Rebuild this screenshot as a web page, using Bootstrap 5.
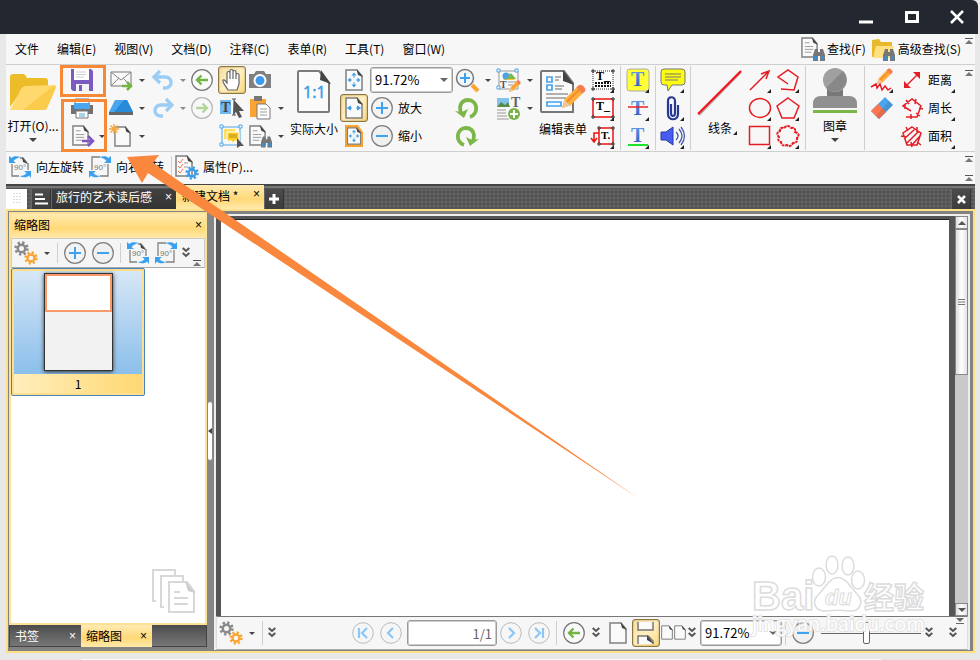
<!DOCTYPE html>
<html lang="zh-CN">
<head>
<meta charset="utf-8">
<meta name="viewport" content="width=device-width, initial-scale=1">
<title>新建文档 *</title>
<link href="https://cdn.jsdelivr.net/npm/bootstrap@5.3.0/dist/css/bootstrap.min.css" rel="stylesheet">
<style>
body{font-family:"Noto Sans CJK SC","Noto Sans",sans-serif;font-size:12px;line-height:16px;color:#000;background:#e8e8e8;min-height:100vh}
svg{display:block;flex:none;overflow:visible}
button{font:inherit;color:inherit;background:none;border:0;padding:0;white-space:nowrap}
.i24{width:24px;height:24px}
.titlebar{background:#23272f;height:34px;border-top-right-radius:6px;margin-right:2px;padding-right:15px;gap:32px;color:#fff}
.frame{margin:0 5px 0 6px;background:#f7f7f7}
.menubar{height:31px;border-bottom:1px solid #cfcfcf}
.menubar a{color:#000;text-decoration:none;padding:0 9px}
.ribbon{border-bottom:1px solid #cfcfcf;padding:1px 0;min-height:87px}
.rightcap{width:14px;flex:none}
.stack{width:28px;display:flex;flex-direction:column;flex:none}
.tool{width:28px;height:28px;display:flex;align-items:center;justify-content:center;position:relative;flex:none}
.drop{width:14px;height:28px;display:flex;align-items:center;justify-content:center;flex:none}
.drop::after,.tri{content:"";border:3px solid transparent;border-top-color:#444;border-bottom:0;width:0;height:0}
.wide14{width:14px}
.narrow{width:11px}
.narrow .drop{width:11px}
.tri.wide{border-width:4px 4px 0}
.dim{opacity:.6}
.more::after{content:"";position:absolute;right:3px;bottom:1px;border:2px solid;border-color:transparent #222 #222 transparent}
.picked{border:1px solid #8c7540;border-radius:3px;background:linear-gradient(135deg,#f6dfa2,#fff0c2 50%,#fbd880);box-shadow:inset 0 0 2px #a98d4c}
.gap2{margin-left:2px}
.big{display:flex;flex-direction:column;align-items:center;flex:none;position:relative;width:52px}
.big.wider{width:54px}
.big span{line-height:16px}
.zoomcol{width:83px}
.zoomcol > *{height:28px}
.measure{width:62px}
.rule{width:1px;background:#cfcfcf;margin:0 3px;flex:none;align-self:stretch}
.box{border:1px solid #9a9a9a;box-shadow:inset 0 0 0 1px #ccc;border-radius:3px;background-color:#fff;font-size:13px;line-height:24px;height:26px;padding:0 4px;color:#000}
.box.form-select{background-image:url("data:image/svg+xml,%3Csvg xmlns='http://www.w3.org/2000/svg' viewBox='0 0 8 4'%3E%3Cpath d='M0 0h8L4 4z' fill='%23666'/%3E%3C/svg%3E");background-size:8px 4px;background-position:right 4px center}
.props{height:32px;padding:0 2px 2px}
.weave{background-color:#5a5a5a;background-image:radial-gradient(#515151 1px,transparent 1px),radial-gradient(#636363 1px,transparent 1px);background-size:4px 4px;background-position:0 0,2px 2px}
.tabs{height:25px;border-top:2px solid #444;box-shadow:inset 0 2px #777}
.tabs button{height:20px}
.tabgrip{width:21px;height:20px}
.blk{background:linear-gradient(#4b4b4b,#3c3c3c);border-right:1px solid #333;border-left:1px solid #666;width:20px;display:flex;align-items:center;justify-content:center}
.doctab{background:linear-gradient(#414141,#333);color:#fff;width:125px;border-left:1px solid #666;padding-bottom:4px}
.gold{background:linear-gradient(#ffeab0,#ffd978 60%,#ffe9ab)}
.goldline{height:2px;background:#fde08a}
.tabs .nowtab{width:88px;height:24px;padding:0 4px 2px 6px}
.x{font-family:"Liberation Sans",sans-serif;font-size:12px;line-height:12px}
.work{border:2px solid #fddf88;border-top:0;background-color:#828282;flex:1;padding:1px 3px 1px 0}
.side{width:199px;padding-left:1px}
.sidebox{border:2px solid #fbe29a;flex:1;background:#fff}
.sidehead{height:24px;padding:0 3px 2px}
.sidebar{height:30px;background:#f5f5f5;border:1px solid #ccc;border-bottom-color:#aaa;position:relative}
.thumb{width:134px;border:1px solid #4784bd;border-radius:2px;padding:2px;background:#ffdf8b}
.sky{background:linear-gradient(#d7e7f6,#8bbfeb);height:103px;padding-top:2px}
.sheet{width:69px;height:98px;border:1px solid #333;background:#f2f2f2;box-shadow:0 1px 4px #333}
.view{height:38px;border:2px solid #fa9a68;background:#fff}
.num{height:19px;background:linear-gradient(90deg,#ffeebd,#ffd873);line-height:19px}
.foottabs{height:22px;margin-bottom:3px;border:1px solid #444;border-top:0;background:linear-gradient(#4c4c4c,#777)}
.foottabs button{color:#fff;height:22px;padding:0 5px;width:71px}
.split{width:7px;background:#868686}
.grip{width:6px;height:60px;border:1px solid #888;border-radius:3px;background:#fff;margin-top:-1px}
.doc{border:2px solid #eee;border-bottom:0;margin-top:2px;background:#555}
.canvas{background:#fff;border-top:1px solid #222;margin:3px 6px 0 5px}
.scroll{width:13px;background:#c9c9c9}
.scroll button{height:13px;display:flex;align-items:center;justify-content:center;background:linear-gradient(90deg,#ddd,#fff,#e3e3e3);border:1px solid #888}
.scroll .bar{height:146px}
.status{height:34px;background:#f6f6f6;border:1px solid #888;border-color:#777 #ddd #aaa;position:relative;padding-right:2px}
.pageno{width:90px;text-align:right;color:#666}
.pct{width:82px}
.zoomer{appearance:none;width:100px;height:24px;background:linear-gradient(#666,#666) center/100% 1px no-repeat}
.zoomer::-webkit-slider-thumb{appearance:none;width:7px;height:22px;border:1px solid #666;border-radius:2px;background:#fff}
.corner{position:absolute;right:3px}
.overlay{position:absolute;left:0;top:0;pointer-events:none}
.watermark{position:absolute;right:48px;bottom:22px;width:180px;height:84px;pointer-events:none}
.watermark text{font-family:"Noto Sans CJK SC",sans-serif}
.watermark .latin{font-family:"Liberation Sans",sans-serif}
.under{height:7px;padding:6px 99px 0 81px}
.under div{height:1px;background:#fff}
</style>
<script src="https://cdn.jsdelivr.net/npm/bootstrap@5.3.0/dist/js/bootstrap.bundle.min.js"></script>
</head>
<body class="d-flex flex-column position-relative">
<svg width="0" height="0" class="position-absolute" aria-hidden="true">
<defs>
<linearGradient id="gb" x1="0" y1="0" x2="0" y2="1"><stop offset="0" stop-color="#6ba0f0"/><stop offset="1" stop-color="#2257c0"/></linearGradient>
<symbol id="plus" viewBox="0 0 24 24"><circle cx="12" cy="12" r="10.3" fill="#f3f3f3" stroke="#808080" stroke-width="1.3"/><path d="M12 6v12M6 12h12" stroke="#3fa2ee" stroke-width="2"/></symbol>
<symbol id="minus" viewBox="0 0 24 24"><circle cx="12" cy="12" r="10.3" fill="#f0f0f0" stroke="#808080" stroke-width="1.3"/><path d="M6 12h12" stroke="#3fa2ee" stroke-width="2"/></symbol>
<symbol id="back" viewBox="0 0 24 24"><circle cx="12" cy="12" r="10.3" fill="#fafafa" stroke="#777" stroke-width="1.2"/><path d="M18 12H7M11.500 7.500L7 12l4.500 4.500" fill="none" stroke="#73b443" stroke-width="2.400"/></symbol>
<symbol id="binoc" viewBox="0 0 12 12"><path d="M2 0h3v3h2V0h3l2 6v6H7V7H5v5H0V6z" fill="#777"/><path d="M1 7h3v4H1zM8 7h3v4H8z" fill="#438bc2"/></symbol>
<symbol id="paper" viewBox="0 0 18 22"><path d="M1 1h11l5 6v14H1z" fill="#fafafa" stroke="#808080" stroke-width="1.5"/><path d="M11.500 0L18 8l-5-2z" fill="#444"/></symbol>
<symbol id="lines" viewBox="0 0 18 22"><use href="#paper" width="18" height="22"/><path d="M4 6h5M4 10h9M4 13h9M4 16h7" stroke="#999" fill="none"/></symbol>
<symbol id="cross4" viewBox="0 0 18 22"><use href="#paper" width="18" height="22"/><g fill="#3f9fe9"><path d="M9 3.500l2.500 3h-5zM9 18.500l2.500-3h-5zM2.500 11l3-2.500v5zM15.500 11l-3-2.500v5z"/></g><path d="M9 6v3M9 13v3M5 11h2M11 11h2" stroke="#3f9fe9"/></symbol>
<symbol id="gear" viewBox="-12 -12 24 24"><circle r="6" fill="none" stroke="currentColor" stroke-width="4"/><circle r="9" fill="none" stroke="currentColor" stroke-width="5" stroke-dasharray="3.500 3.570"/></symbol>
<symbol id="gears" viewBox="0 0 24 24"><use href="#gear" x="0" y="0" width="15" height="15" color="#8a8a8a"/><use href="#gear" x="10" y="10" width="14" height="14" color="#f9a534"/></symbol>
<symbol id="rotl" viewBox="0 0 24 24"><path d="M4 9v12h7M12 3h3l4 5M20 8v7" fill="none" stroke="#808080" stroke-width="1.300"/><path d="M14 2l6 7-5-2z" fill="#444"/><path d="M1 1v7h7L5.500 6C7 4 9 3 13 2 8 .5 5 1 3.500 3zM23 23v-7h-7l2.500 2c-1 2-4 3-7 3 4 2 8 1.500 9.500-.500z" fill="#3ba1ef"/><text x="6" y="15" font-size="8" fill="#777" font-family="Liberation Sans">90°</text></symbol>
<symbol id="rotr" viewBox="0 0 24 24"><path d="M4 15V2h8M12 21h8V9" fill="none" stroke="#808080" stroke-width="1.300"/><path d="M23 1v7h-7l2.500-2C17 4 15 3 11 2c5-1.500 8-1 9.500 1zM1 23v-7h7l-2.500 2c1 2 4 3 7 3-4 2-8 1.500-9.500-.500z" fill="#3ba1ef"/><text x="6" y="15" font-size="8" fill="#777" font-family="Liberation Sans">90°</text></symbol>
<symbol id="chev" viewBox="0 0 8 12"><path d="M.7 1L4 4l3.300-3M.7 6L4 9l3.300-3" fill="none" stroke="#555" stroke-width="2"/></symbol>
<symbol id="cap" viewBox="0 0 8 7"><path d="M0 .5h8" stroke="#555"/><path d="M4 2l4 4H0z" fill="#777"/></symbol>
<symbol id="undo" viewBox="0 0 24 24"><path d="M4 9h10c8 0 8 11 0 11h-2" fill="none" stroke="#9ccdf5" stroke-width="3.500"/><path d="M9 3L3 9l6 6" fill="none" stroke="#9ccdf5" stroke-width="3.200"/></symbol>
<symbol id="turn" viewBox="0 0 24 24"><path d="M6 17C3 8 8 4 13 4c10 0 11 14 2 17" fill="none" stroke="#7cb548" stroke-width="3.800"/><path d="M0 15l9 7 4-9-6 3z" fill="#7cb548"/></symbol>
<symbol id="pencil" viewBox="0 0 20 20"><path d="M0 20l2-7L14 1l5 5L7 18z" fill="#fdae3c"/><path d="M0 20l2-7 5 5z" fill="#edc69c"/><path d="M12 3l2-2c2-2 7 3 5 5l-2 2z" fill="#f47b56"/><path d="M4 15L15 4" stroke="#f58a28" stroke-width="1.500"/></symbol>
<symbol id="fr" viewBox="0 0 24 24"><g fill="#fff" stroke="#222"><path d="M1 2h2v2H1zM21 2h2v2h-2zM1 20h2v2H1zM21 20h2v2h-2z"/></g></symbol>
</defs>
</svg>

<header class="titlebar d-flex align-items-center justify-content-end">
<button aria-label="最小化"><svg width="14" height="16"><path d="M0 13h14" stroke="#fff" stroke-width="3"/></svg></button>
<button aria-label="最大化"><svg width="14" height="12"><path d="M1.500 1.500h11v9h-11z" fill="none" stroke="#fff" stroke-width="3"/></svg></button>
<button aria-label="关闭"><svg width="12" height="12"><path d="M0 0l12 12M12 0L0 12" stroke="#fff" stroke-width="2.500"/></svg></button>
</header>

<main class="frame d-flex flex-column flex-grow-1">
<nav class="menubar d-flex align-items-center text-nowrap">
<a href="#">文件</a><a href="#">编辑(E)</a><a href="#">视图(V)</a><a href="#">文档(D)</a><a href="#">注释(C)</a><a href="#">表单(R)</a><a href="#">工具(T)</a><a href="#">窗口(W)</a>
<button class="ms-auto d-flex align-items-center gap-1 me-1"><svg width="22" height="24"><use href="#lines" width="17" height="21"/><use href="#binoc" x="12" y="12" width="12" height="12"/></svg>查找(F)</button>
<button class="d-flex align-items-center gap-1 gap2"><svg width="22" height="24"><path d="M0 3l7-1 2 3h11v15H0z" fill="#e8b92c"/><path d="M1 21L4 9h18l-3 12z" fill="#ffe083"/><use href="#binoc" x="11" y="12" width="12" height="12"/></svg>高级查找(S)</button>
<span class="rightcap align-self-start pt-1 ps-1"><svg width="8" height="7"><use href="#cap"/></svg></span>
</nav>

<section class="ribbon d-flex" aria-label="工具栏">
<button class="big wider pt-1"><svg width="48" height="44" viewBox="0 0 48 44"><path d="M1 37V7q0-3 3-3h10q2 0 4 4h18q3 0 3 3v8H14z" fill="#edbd29"/><path d="M1 40L12 19q1-2 4-3l29 -1q3 0 2 3l-9 20q-1 2-3 2z" fill="#ffd96d"/><path d="M14 40L44 16q3 0 2 3l-8 19q-1 2-3 2z" fill="#fbcc4c"/></svg><span class="mt-1">打开(O)...</span><i class="tri wide mt-1"></i></button>
<div class="stack ms-2">
<button class="tool" aria-label="保存"><svg class="i24"><path d="M1 1h20l2 2v20H3l-2-2z" fill="#7b5bc0"/><path d="M4 1h15v11H4z" fill="#fff"/><path d="M6 4h10M6 6.500h10M6 9h8" stroke="#ccc"/><path d="M6 16h13v7H6z" fill="#f4f4f4"/><path d="M9 17h3v6H9z" fill="#7b5bc0"/></svg></button>
<button class="tool" aria-label="打印"><svg class="i24"><path d="M1 9h22v9H1z" fill="#727272"/><path d="M5 3h14v6H5z" fill="#fff" stroke="#777"/><path d="M4 7h16v6H4z" fill="#4aa6ed"/><path d="M6 15h12v7H6z" fill="#fff" stroke="#777"/><path d="M9 18h6M9 20h6" stroke="#57a5dc"/></svg></button>
<button class="tool" aria-label="导出"><svg class="i24"><use href="#lines" x="2" y="1" width="17" height="21"/><path d="M12 17h10M18 12l5 5-5 5" fill="none" stroke="#7f57c2" stroke-width="2.500"/></svg></button>
</div>
<div class="stack narrow justify-content-end"><button class="drop" aria-label="导出选项"></button></div>
<div class="stack">
<button class="tool" aria-label="邮件"><svg class="i24"><path d="M2 4h20v14H2z" fill="#f8f8f8" stroke="#777"/><path d="M2 4l10 8L22 4M2 18l8-8M22 18l-8-8" fill="none" stroke="#888"/><path d="M13 18h8M18 14l4 4-4 4" fill="none" stroke="#73b443" stroke-width="2.500"/></svg></button>
<button class="tool" aria-label="扫描"><svg class="i24"><path d="M6 4h12l6 12H0z" fill="#4aa5ec"/><path d="M15 4h3l6 12H5z" fill="#288bd9"/><path d="M0 16h24v3H0z" fill="#666"/></svg></button>
<button class="tool" aria-label="新建"><svg class="i24"><use href="#paper" x="5" y="2" width="17" height="21"/><path d="M5 0v10M0 5h10M1.500 1.500l7 7M8.500 1.500l-7 7" stroke="#f9a63b" stroke-width="1.300"/></svg></button>
</div>
<div class="stack wide14"><button class="drop" aria-label="邮件选项"></button><button class="drop" aria-label="扫描选项"></button><button class="drop" aria-label="新建选项"></button></div>
<div class="stack"><button class="tool" aria-label="撤销"><svg class="i24"><use href="#undo"/></svg></button><button class="tool" aria-label="重做"><svg class="i24"><use href="#undo" transform="translate(24 0) scale(-1 1)"/></svg></button></div>
<div class="stack narrow"><button class="drop dim" aria-label="撤销选项"></button><button class="drop dim" aria-label="重做选项"></button></div>
<div class="stack"><button class="tool" aria-label="后退"><svg class="i24"><use href="#back"/></svg></button><button class="tool" aria-label="前进"><svg class="i24" opacity=".5"><use href="#back" transform="translate(24 0) scale(-1 1)"/></svg></button></div>
<div class="stack gap2">
<button class="tool picked" aria-label="手形"><svg class="i24"><path d="M8 22C5 17 2 14 3 12c2-1 3 2 4 3V5c0-2 3-2 3 0v6V3c0-2 3-2 3 0v8V4c0-2 3-2 3 0v7V7c0-2 3-2 3 0v9l-2 6z" fill="#fff" stroke="#666" stroke-width="1.200"/></svg></button>
<button class="tool" aria-label="选择文本"><svg class="i24"><path d="M0 4h11v14H0z" fill="#74b9ed"/><text x="1" y="16" font-family="Liberation Serif" font-weight="bold" font-size="14" fill="#444">T</text><path d="M12 3h4M14 3v16M12 19h4" stroke="#555"/><path d="M14 4l10 11-5 0 3 6-3 1-3-6-3 3z" fill="#555"/></svg></button>
<button class="tool" aria-label="选择注释"><svg class="i24"><path d="M2 3h18v18H2z" fill="none" stroke="#51a4e4"/><path d="M4 5h11v10H4z" fill="#ffe05c"/><path d="M7 8h12v9h-4l-3 3v-3H7z" fill="#fdce2a" stroke="#fff"/><path d="M9 11h8M9 13h8" stroke="#b68b15"/><g fill="#fff" stroke="#51a4e4"><path d="M0 1h3v3H0zM19 1h3v3h-3zM0 19h3v3H0z"/></g><path d="M17 14l7 8-4 0-3 2z" fill="#555"/></svg></button>
</div>
<div class="stack">
<button class="tool" aria-label="快照"><svg class="i24"><path d="M1 6h5l2-3h8l2 3h5v14H1z" fill="#808080"/><circle cx="12" cy="12.500" r="5.500" fill="#3f9aec" stroke="#fff" stroke-width="2"/></svg></button>
<button class="tool" aria-label="粘贴"><svg class="i24"><path d="M2 3h16v18H2z" fill="#fba333"/><path d="M6 0h8v5H6z" fill="#777"/><path d="M9 8h9l4 4v11H9z" fill="#fff" stroke="#777"/><path d="M12 13h7M12 16h7M12 19h7" stroke="#999"/></svg></button>
<button class="tool" aria-label="查找"><svg class="i24"><use href="#lines" x="1" y="1" width="17" height="21"/><use href="#binoc" x="13" y="12" width="11" height="12"/></svg></button>
</div>
<div class="stack wide14 justify-content-end"><button class="drop" aria-label="粘贴选项"></button><button class="drop" aria-label="查找选项"></button></div>
<button class="big pt-1"><svg width="34" height="43" viewBox="0 0 34 43"><path d="M2 1h20l10 12v28q0 1-1 1H2q-1 0-1-1V2q0-1 1-1z" fill="#fafafa" stroke="#7a7a7a" stroke-width="2"/><path d="M24 0l10 14-11-4z" fill="#454545"/><text x="6" y="28" font-family="Noto Sans" font-size="16" fill="#3a9de9" stroke="#3a9de9" stroke-width=".4">1:1</text></svg><span class="mt-2">实际大小</span></button>
<div class="stack">
<button class="tool" aria-label="适合页面"><svg class="i24"><use href="#cross4" x="3" y="1" width="18" height="22"/></svg></button>
<button class="tool picked" aria-label="适合宽度"><svg class="i24"><use href="#paper" x="3" y="1" width="18" height="22"/><path d="M5.500 12l3-2v4zM18.500 12l-3-2v4zM8 12h2M14 12h2" fill="#3f9fe9" stroke="#3f9fe9"/></svg></button>
<button class="tool" aria-label="适合可见"><svg class="i24"><path d="M3 1h13l5 7v15H3z" fill="#f7a32d"/><use href="#cross4" x="4" y="3" width="16" height="18"/></svg></button>
</div>
<div class="stack zoomcol gap2">
<div class="d-flex align-items-center"><select id="zoomTop" class="form-select box" aria-label="缩放"><option>91.72%</option></select></div>
<button class="d-flex align-items-center gap-1"><svg class="i24"><use href="#plus"/></svg>放大</button>
<button class="d-flex align-items-center gap-1"><svg class="i24"><use href="#minus"/></svg>缩小</button>
</div>
<div class="stack">
<button class="tool" aria-label="放大镜"><svg class="i24"><path d="M17 17l6 6" stroke="#fba533" stroke-width="4"/><circle cx="10" cy="10" r="8.500" fill="#f2f7fb" stroke="#777" stroke-width="1.500"/><path d="M10 5v10M5 10h10" stroke="#3ca0ed" stroke-width="2"/></svg></button>
<button class="tool" aria-label="逆时针旋转"><svg class="i24"><use href="#turn"/></svg></button>
<button class="tool" aria-label="顺时针旋转"><svg class="i24"><use href="#turn" transform="translate(24 0) scale(-1 1)"/></svg></button>
</div>
<div class="stack wide14"><button class="drop" aria-label="缩放选项"></button></div>
<div class="stack">
<button class="tool" aria-label="编辑内容"><svg class="i24"><path d="M2 3h19v18H2z" fill="#fafafa" stroke="#999"/><path d="M6 12L12 5l6 7z" fill="#fbc62d"/><circle cx="9" cy="8" r="3.500" fill="#4aa2e9"/><path d="M9 11l5-6 5 6z" fill="#7bb853"/><text x="3" y="20" font-size="10" font-weight="bold" font-family="Liberation Serif" fill="#555">T</text><path d="M11 14h8M11 17h5" stroke="#999"/><g fill="#fff" stroke="#4aa2e9"><path d="M0 1h3v3H0zM18 1h3v3h-3zM0 18h3v3H0z"/></g><use href="#pencil" x="12" y="12" width="12" height="12"/></svg></button>
<button class="tool" aria-label="添加内容"><svg class="i24"><path d="M0 2h12v9H0z" fill="#84c2ea"/><path d="M0 11l4-5 4 3 3-3 2 5z" fill="#598c48"/><text x="14" y="11" font-size="14" font-weight="bold" font-family="Liberation Serif" fill="#666">T</text><path d="M0 14h9M0 17h9M0 20h10M0 23h12" stroke="#999"/><circle cx="17" cy="18" r="6" fill="#7ab449"/><path d="M17 14v8M13 18h8" stroke="#fff" stroke-width="2"/></svg></button>
</div>
<div class="stack wide14"><button class="drop" aria-label="内容选项"></button><button class="drop" aria-label="添加选项"></button></div>
<button class="big pt-1"><svg width="46" height="43" viewBox="0 0 46 43"><path d="M2 1h22l9 12v29H2q-1 0-1-1V2q0-1 1-1z" fill="#fafafa" stroke="#777" stroke-width="2"/><path d="M23 0l11 15-11-4z" fill="#444"/><g fill="none" stroke="#46a3ed" stroke-width="1.700"><path d="M7 7h5v5H7zM7 15h5v5H7zM7 32h14v4H7z"/></g><path d="M15 7h6M15 10h4M15 16h9M15 19h7M6 24h22M6 28h20" stroke="#999" stroke-width="1.500"/><use href="#pencil" x="22" y="14" width="24" height="24"/></svg><span class="mt-2">编辑表单</span></button>
<div class="stack">
<button class="tool more" aria-label="文本框"><svg class="i24"><path d="M2 3h20v18H2z" fill="#fff" stroke="#333" stroke-dasharray="1 1"/><use href="#fr"/><text x="5" y="12" font-size="12" font-weight="bold" font-family="Liberation Serif">T_</text><path d="M4 15h16M4 18h16" stroke="#111" stroke-width="2" stroke-dasharray="2 1"/></svg></button>
<button class="tool more" aria-label="文字标注"><svg class="i24"><path d="M2 3h20v18H2z" fill="#fff" stroke="#e11" stroke-width="1.500"/><use href="#fr"/><text x="5" y="14" font-size="12" font-weight="bold" font-family="Liberation Serif">T_</text></svg></button>
<button class="tool more" aria-label="引出标注"><svg class="i24"><path d="M8 4h14v16H8z" fill="#fff" stroke="#e11" stroke-width="1.500"/><path d="M8 9H3v9M0 14l3 4 3-4" fill="none" stroke="#e11" stroke-width="1.500"/><text x="10" y="15" font-size="11" font-weight="bold" font-family="Liberation Serif">T.</text><g fill="#fff" stroke="#222"><path d="M7 3h2v2H7zM21 3h2v2h-2zM7 19h2v2H7zM21 19h2v2h-2z"/></g></svg></button>
</div>
<div class="rule"></div>
<div class="stack">
<button class="tool more" aria-label="高亮"><svg class="i24"><rect x="1" y="1" width="22" height="22" rx="3" fill="#ff3" stroke="#aaa"/><text x="5" y="18" font-size="20" font-weight="bold" font-family="Liberation Serif" fill="url(#gb)">T</text></svg></button>
<button class="tool more" aria-label="删除线"><svg class="i24"><text x="5" y="19" font-size="20" font-weight="bold" font-family="Liberation Serif" fill="url(#gb)">T</text><path d="M2 11h20" stroke="#e22" stroke-width="1.500"/></svg></button>
<button class="tool more" aria-label="下划线"><svg class="i24"><text x="5" y="18" font-size="20" font-weight="bold" font-family="Liberation Serif" fill="url(#gb)">T</text><path d="M2 21h20" stroke="#1de32a" stroke-width="2"/></svg></button>
</div>
<div class="rule"></div>
<div class="stack">
<button class="tool more" aria-label="附注"><svg class="i24"><path d="M3 1h18q3 0 3 3v10q0 3-3 3H11l-4 6-1-6H3q-3 0-3-3V4q0-3 3-3z" fill="#fcfc10" stroke="#777"/><path d="M4 6h16M4 9h16M4 12h13" stroke="#777"/></svg></button>
<button class="tool more" aria-label="附件"><svg class="i24"><path d="M10 8v9c0 4 4 4 4 0V5c0-5-7-5-7 0v13c0 7 10 7 10 0V9" fill="none" stroke="#273992" stroke-width="2.200"/></svg></button>
<button class="tool more" aria-label="声音"><svg class="i24"><path d="M0 8h5l7-5v18l-7-5H0z" fill="#465df2" stroke="#263c9e"/><path d="M15 8q4 4 0 8M18 5q6 7 0 14M20 3q7 9 0 18" fill="none" stroke="#465ba9" stroke-width="1.300"/></svg></button>
</div>
<div class="rule"></div>
<button class="big pt-1"><svg width="46" height="46"><path d="M2 45L44 2" stroke="#aaa" stroke-width="2"/><path d="M1 44L44 1" stroke="#f5121a" stroke-width="2.200"/></svg><span class="more px-2 mt-1 position-relative">线条</span></button>
<div class="stack">
<button class="tool more" aria-label="箭头"><svg class="i24" fill="none" stroke="#e51c23" stroke-width="1.500"><path d="M2 22L20 4M13 6l8-3-3 8"/></svg></button>
<button class="tool more" aria-label="椭圆"><svg class="i24"><ellipse cx="12" cy="12" rx="10.500" ry="9.500" fill="none" stroke="#e51c23" stroke-width="1.500"/></svg></button>
<button class="tool more" aria-label="矩形"><svg class="i24"><path d="M1.500 2.500h20v18h-20z" fill="none" stroke="#e51c23" stroke-width="1.500"/></svg></button>
</div>
<div class="stack">
<button class="tool more" aria-label="折线"><svg class="i24"><path d="M12 16L2 9l10-7 10 7-4 13-13-1" fill="none" stroke="#e51c23" stroke-width="1.500"/></svg></button>
<button class="tool more" aria-label="多边形"><svg class="i24"><path d="M12 2l11 8-5 12H6L1 10z" fill="none" stroke="#e51c23" stroke-width="1.500"/></svg></button>
<button class="tool more" aria-label="云朵"><svg class="i24"><path d="M8 4q4-4 7 0 5-1 4 4 6 2 2 6 1 5-4 5-3 5-6 2-5 2-6-3-4-1-2-5-4-4 1-6 0-4 4-3z" fill="none" stroke="#e51c23" stroke-width="2" stroke-dasharray="3 .7"/></svg></button>
</div>
<div class="rule"></div>
<button class="big"><svg width="44" height="48" viewBox="0 0 44 48"><path d="M14 23h16v10H14z" fill="#787878"/><path d="M0 42V38q0-8 8-8h28q8 0 8 8v4z" fill="#909090"/><circle cx="22" cy="14" r="12" fill="#a0a0a0"/><path d="M13 22L30 5q7 9 0 17-8 7-17 0z" fill="#888"/><path d="M0 44h44v3H0z" fill="#7cb548"/></svg><span class="mt-1">图章</span><i class="tri wide mt-1"></i></button>
<div class="rule"></div>
<div class="stack">
<button class="tool more" aria-label="铅笔"><svg class="i24"><use href="#pencil" x="7" y="0" width="16" height="16"/><path d="M1 19l5-3 1 4 3-4 2 6 3-4 3 4 3-2" fill="none" stroke="#e51c23" stroke-width="1.500"/></svg></button>
<button class="tool" aria-label="橡皮擦"><svg class="i24"><path d="M1 15L15 1l8 8L9 23z" fill="#4aa5ed"/><path d="M1 15l7-7 8 8-7 7z" fill="#ff7550"/><path d="M6 20L19 5l4 4L9 23z" fill="#333" opacity=".15"/></svg></button>
</div>
<div class="stack measure">
<button class="tool more w-100 justify-content-start ps-1 gap-1"><svg class="i24"><path d="M7 17L17 7" stroke="#e51c23" stroke-width="1.500"/><path d="M4 20v-7l7 7zM20 4v7l-7-7z" fill="#e51c23"/></svg>距离</button>
<button class="tool more w-100 justify-content-start ps-1 gap-1"><svg class="i24" fill="none" stroke="#e51c23" stroke-width="1.500"><path d="M11 15L3 10l9-7 9 7-4 11H6M6 4l3 4M16 3l-1 5M19 12l4 1M11 18v5M16 17l4 3M5 8v5"/></svg>周长</button>
<button class="tool more w-100 justify-content-start ps-1 gap-1"><svg class="i24" fill="none" stroke="#e51c23" stroke-width="1.500"><path d="M12 3l9 6-4 12H7L3 9zM4 15L15 5M6 20L19 7M12 21l8-9M6 3l2 4M17 3v5M1 12l5 1M17 18l4 3M11 18l1 5"/></svg>面积</button>
</div>
<span class="rightcap ms-auto ps-1 pt-1"><svg width="8" height="7"><use href="#cap"/></svg></span>
</section>

<section class="props d-flex align-items-center">
<button class="d-flex align-items-center gap-1 me-1"><svg class="i24"><use href="#rotl"/></svg>向左旋转</button>
<button class="d-flex align-items-center gap-1 me-1"><svg class="i24"><use href="#rotr"/></svg>向右旋转</button>
<div class="rule my-1"></div>
<button class="d-flex align-items-center gap-1"><svg class="i24"><use href="#paper" width="18" height="22"/><path d="M3 6l2 2 3-4M3 11l2 2 3-4M3 16l2 2 3-4" fill="none" stroke="#ef704e"/><path d="M9 8h4M9 12h4" stroke="#999"/><use href="#gear" x="10" y="11" width="14" height="14" color="#3d9ce9"/></svg>属性(P)...</button>
<span class="ms-auto d-flex flex-column justify-content-between h-100 pt-1"><svg width="8" height="7"><use href="#cap"/></svg><svg width="8" height="7"><use href="#cap"/></svg></span>
</section>

<section class="tabs weave d-flex align-items-end">
<span class="tabgrip bg-white d-flex align-items-center justify-content-center me-1"><svg width="7" height="12"><path d="M1 0v12M4 0v12M7 0v12" stroke="#bbb" stroke-dasharray="1 2"/></svg></span>
<button class="blk" aria-label="文档列表"><svg width="13" height="12"><path d="M0 1.500h8M0 6h10M0 10.500h13" stroke="#fff" stroke-width="2"/></svg></button>
<button class="doctab d-flex align-items-center justify-content-between ps-1 pe-1">旅行的艺术读后感<span class="x">×</span></button>
<button class="nowtab gold d-flex justify-content-between align-items-center">新建文档 *<span class="x mb-1">×</span></button>
<button class="blk" aria-label="新建标签"><svg width="10" height="10"><path d="M5 0v10M0 5h10" stroke="#fff" stroke-width="3"/></svg></button>
<button class="blk ms-auto me-1" aria-label="关闭文档"><svg width="9" height="9"><path d="M1 1l7 7M8 1L1 8" stroke="#fff" stroke-width="2.500"/></svg></button>
</section>
<div class="goldline"></div>

<section class="work d-flex">
<aside class="side d-flex flex-column flex-shrink-0">
<div class="sidebox d-flex flex-column">
<div class="sidehead gold d-flex align-items-center justify-content-between">缩略图<button class="x" aria-label="关闭缩略图">×</button></div>
<div class="sidebar d-flex align-items-center">
<button class="tool" aria-label="选项"><svg class="i24"><use href="#gears"/></svg></button><button class="drop" aria-label="更多选项"></button><div class="rule my-1"></div>
<button class="tool" aria-label="放大缩略图"><svg class="i24"><use href="#plus"/></svg></button><button class="tool" aria-label="缩小缩略图"><svg class="i24"><use href="#minus"/></svg></button><div class="rule my-1"></div>
<button class="tool" aria-label="向左"><svg class="i24"><use href="#rotl"/></svg></button><button class="tool" aria-label="向右"><svg class="i24"><use href="#rotr"/></svg></button>
<button class="gap2" aria-label="更多"><svg width="8" height="12"><use href="#chev"/></svg></button>
<svg class="corner bottom-0" width="8" height="7"><use href="#cap"/></svg>
</div>
<div class="thumb"><div class="sky"><div class="sheet mx-auto"><div class="view"></div></div></div><div class="num text-center">1</div></div>
<svg class="mt-auto ms-auto me-2 mb-2" width="46" height="46" fill="#fff" stroke="#d8d8d8" stroke-width="2"><path d="M5 32H2V1h22v5M13 38h-3V7h22v5"/><path d="M18 13h18l7 9v21H18z"/><path d="M34 12l10 12-7-2z" fill="#ccc" stroke="none"/><path d="M23 23h6M23 29h14M23 35h14"/></svg>
</div>
<div class="foottabs d-flex">
<button class="d-flex align-items-center justify-content-between">书签<span class="x">×</span></button>
<button class="gold text-black d-flex align-items-center justify-content-between">缩略图<span class="x">×</span></button>
</div>
</aside>
<div class="split d-flex align-items-center flex-shrink-0"><button class="grip" aria-label="折叠面板"><svg width="4" height="6"><path d="M4 0v6L0 3z" fill="#444"/></svg></button></div>
<div class="doc d-flex flex-column flex-grow-1">
<div class="d-flex flex-grow-1">
<div class="canvas flex-grow-1"></div>
<div class="scroll d-flex flex-column">
<button aria-label="向上滚动"><svg width="8" height="4"><path d="M0 4h8L4 0z" fill="#555"/></svg></button>
<button class="bar" aria-label="滚动条"><svg width="7" height="6"><path d="M0 .5h7M0 3h7M0 5.500h7" stroke="#777"/></svg></button>
<button class="mt-auto" aria-label="向下滚动"><svg width="8" height="4"><path d="M0 0h8L4 4z" fill="#555"/></svg></button>
</div>
</div>
<div class="status d-flex align-items-center">
<button class="tool" aria-label="设置"><svg class="i24"><use href="#gears"/></svg></button><button class="drop" aria-label="设置选项"></button><div class="rule my-1"></div>
<button class="gap2" aria-label="更多工具"><svg width="8" height="12"><use href="#chev"/></svg></button>
<div class="ms-auto d-flex align-items-center h-100">
<button class="tool" aria-label="首页"><svg class="i24" fill="none"><circle cx="12" cy="12" r="10.300" stroke="#bbb"/><path d="M8 7v10M16 7l-5 5 5 5" stroke="#8ac6f6" stroke-width="2.200"/></svg></button>
<button class="tool" aria-label="上一页"><svg class="i24" fill="none"><circle cx="12" cy="12" r="10.300" stroke="#bbb"/><path d="M14 7l-5 5 5 5" stroke="#8ac6f6" stroke-width="2.200"/></svg></button>
<input id="pageNo" class="box pageno gap2" value="1/1" aria-label="页码">
<button class="tool" aria-label="下一页"><svg class="i24" fill="none"><circle cx="12" cy="12" r="10.300" stroke="#bbb"/><path d="M10 7l5 5-5 5" stroke="#8ac6f6" stroke-width="2.200"/></svg></button>
<button class="tool" aria-label="末页"><svg class="i24" fill="none"><circle cx="12" cy="12" r="10.300" stroke="#bbb"/><path d="M16 7v10M8 7l5 5-5 5" stroke="#8ac6f6" stroke-width="2.200"/></svg></button>
<div class="rule my-1"></div>
<button class="tool" aria-label="返回视图"><svg class="i24"><use href="#back"/></svg></button>
<button class="mx-1" aria-label="更多导航"><svg width="8" height="12"><use href="#chev"/></svg></button>
<button class="tool" aria-label="单页"><svg class="i24"><use href="#paper" x="3" y="1" width="18" height="22"/></svg></button>
<button class="tool picked" aria-label="连续"><svg class="i24"><path d="M4 1v8h15V1M4 23v-8h10l5 5v3" fill="#fafafa" stroke="#777" stroke-width="1.500"/><path d="M13 14l7 9-7-4z" fill="#444"/></svg></button>
<button class="tool" aria-label="双页"><svg width="26" height="24"><use href="#paper" x="0" y="4" width="12" height="15"/><use href="#paper" x="13" y="4" width="12" height="15"/></svg></button>
<button class="me-1" aria-label="更多布局"><svg width="8" height="12"><use href="#chev"/></svg></button>
<select id="zoomBottom" class="form-select box pct" aria-label="缩放比例"><option>91.72%</option></select>
<div class="rule my-1"></div>
<button class="tool" aria-label="缩小视图"><svg class="i24"><use href="#minus"/></svg></button>
<input id="slide" type="range" class="zoomer mx-1" value="45" aria-label="缩放滑块">
<button aria-label="更多缩放"><svg width="8" height="12"><use href="#chev"/></svg></button>
<button class="ms-3 me-2" aria-label="更多状态"><svg width="8" height="12"><use href="#chev"/></svg></button>
</div>
<svg class="corner top-0" width="8" height="7"><path d="M0 1h8L4 5zM0 6h8v1H0z" fill="#666"/></svg>
</div>
</div>
</section>
</main>
<footer class="under"><div></div></footer>

<svg class="watermark" viewBox="0 0 180 84" aria-hidden="true">
<g fill="#fff" stroke="#dcdcdc" stroke-width="1.500"><text x="0" y="56" font-size="40" font-weight="bold" class="latin">Bai</text><text x="112" y="54" font-size="30" font-weight="bold">经验</text>
<ellipse cx="67" cy="23" rx="6.500" ry="9"/><ellipse cx="80" cy="11" rx="6" ry="9"/><ellipse cx="96" cy="12" rx="6" ry="9"/><ellipse cx="106" cy="26" rx="6.500" ry="9"/><path d="M77 28q9-9 18 0l10 12c8 8 2 18-7 17-7-1-17-1-24 0-10 1-16-9-7-17z"/></g>
<text x="73" y="51" font-size="22" font-weight="bold" font-style="italic" class="latin" fill="#fff" stroke="#dcdcdc">du</text>
<text x="0" y="77" font-size="20" fill="#fff" stroke="#e2e2e2" stroke-width="2" paint-order="stroke" opacity=".9">jingyan.baidu.com</text>
</svg>
<svg class="overlay" width="640" height="500" viewBox="0 0 640 500" aria-hidden="true"><g fill="none" stroke="#f68938" stroke-width="3"><path d="M61.500 66.500h43v29h-43zM62.500 100.500h43v50h-43z"/></g><path d="M127 157L159 155l-6 8L638 498 148 173l-6 10z" fill="#f9873e"/></svg>
</body>
</html>
